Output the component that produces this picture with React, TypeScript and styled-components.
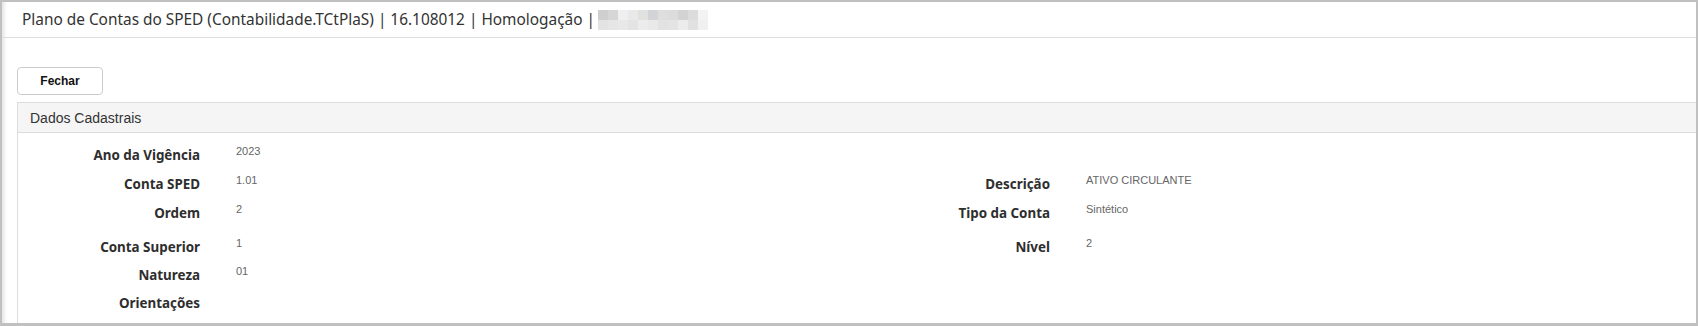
import styled, { createGlobalStyle } from "styled-components";

const GlobalStyle = createGlobalStyle`
  html, body {
    margin: 0;
    padding: 0;
    background: #c0c0c0;
    height: 326px;
    overflow: hidden;
  }
`;

const Frame = styled.div`
  margin: 2px 2px 0 2px;
  height: 321px;
  background: #fff;
  overflow: hidden;
  box-shadow: inset 5px 0 4px -3px rgba(0, 0, 0, 0.12);
`;

const Header = styled.div`
  height: 35px;
  border-bottom: 1px solid #dddddd;
  padding-left: 20px;
  display: flex;
  align-items: center;
  font-family: "Noto Sans", sans-serif;
  font-size: 15.4px;
  color: #333;
  white-space: nowrap;
`;

const Redacted = styled.span`
  display: inline-grid;
  grid-template-columns: repeat(11, 10px);
  grid-auto-rows: 10px;
  margin-left: 3px;
`;

const Cell = styled.span<{ $shade: string }>`
  background: ${(p) => p.$shade};
`;

const Content = styled.div`
  padding: 29px 0 0 15px;
`;

const Button = styled.button`
  width: 86px;
  height: 28px;
  background: #fff;
  border: 1px solid #cccccc;
  border-radius: 4px;
  font-family: "Liberation Sans", Arial, sans-serif;
  font-weight: bold;
  font-size: 12px;
  color: #111;
  padding: 0;
  cursor: pointer;
`;

const Panel = styled.div`
  margin-top: 7px;
  border: 1px solid #dddddd;
  border-right: none;
`;

const PanelHeader = styled.div`
  height: 29px;
  background: #f5f5f5;
  border-bottom: 1px solid #dddddd;
  padding-left: 12px;
  display: flex;
  align-items: center;
  font-family: "Liberation Sans", Arial, sans-serif;
  font-size: 14px;
  color: #333;
`;

const PanelBody = styled.div`
  display: grid;
  grid-template-columns: 1fr 1fr;
  padding: 8px 0 30px;
`;

const Column = styled.div`
  display: flex;
  flex-direction: column;
`;

const Row = styled.div<{ $h: number }>`
  display: flex;
  height: ${(p) => p.$h}px;
`;

const Label = styled.div<{ $w: number }>`
  width: ${(p) => p.$w}px;
  flex: none;
  text-align: right;
  line-height: 29px;
  font-family: "Noto Sans", sans-serif;
  font-weight: bold;
  font-size: 13.4px;
  color: #2e2e2e;
`;

const Value = styled.div`
  margin-left: 36px;
  padding-top: 2px;
  line-height: 16px;
  font-family: "Liberation Sans", Arial, sans-serif;
  font-size: 11px;
  color: #666;
`;

const rowHeights = [29, 29, 34, 28, 28, 28];

const left: [string, string][] = [
  ["Ano da Vigência", "2023"],
  ["Conta SPED", "1.01"],
  ["Ordem", "2"],
  ["Conta Superior", "1"],
  ["Natureza", "01"],
  ["Orientações", ""],
];

const right: [string, string][] = [
  ["", ""],
  ["Descrição", "ATIVO CIRCULANTE"],
  ["Tipo da Conta", "Sintético"],
  ["Nível", "2"],
];

const shades = [
  "#cfcfcf", "#d6d6d6", "#eeeff1", "#e9e9ea", "#e1e1df", "#d2d4d8", "#dedede", "#dcdcdc", "#d3d3d3", "#dcdcdc", "#f2f3f5",
  "#e3e3e3", "#e6e6e6", "#e8e8e8", "#e4e4e4", "#ececec", "#e9e9e9", "#e2e2e2", "#e4e4e4", "#ececec", "#e1e1e1", "#f0f0f0",
];

export default function App() {
  return (
    <>
      <GlobalStyle />
      <Frame>
        <Header>
          Plano de Contas do SPED (Contabilidade.TCtPlaS) | 16.108012 | Homologação |
          <Redacted>
            {shades.map((s, i) => (
              <Cell key={i} $shade={s} />
            ))}
          </Redacted>
        </Header>
        <Content>
          <Button>Fechar</Button>
          <Panel>
            <PanelHeader>Dados Cadastrais</PanelHeader>
            <PanelBody>
              <Column>
                {left.map(([l, v], i) => (
                  <Row key={l} $h={rowHeights[i]}>
                    <Label $w={182}>{l}</Label>
                    <Value>{v}</Value>
                  </Row>
                ))}
              </Column>
              <Column>
                {right.map(([l, v], i) => (
                  <Row key={i} $h={rowHeights[i]}>
                    <Label $w={193}>{l}</Label>
                    <Value>{v}</Value>
                  </Row>
                ))}
              </Column>
            </PanelBody>
          </Panel>
        </Content>
      </Frame>
    </>
  );
}
